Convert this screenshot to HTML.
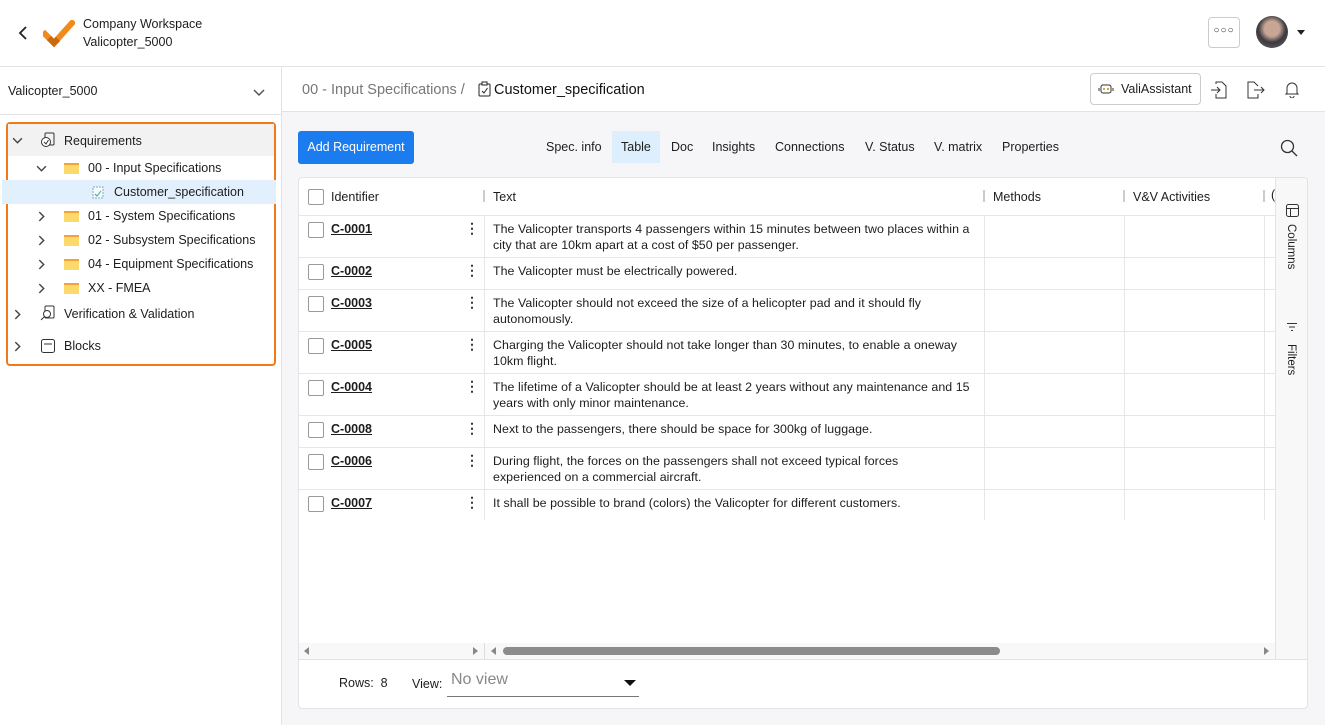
<!DOCTYPE html>
<html><head><meta charset="utf-8"><style>
*{box-sizing:border-box;margin:0;padding:0}
body{width:1325px;height:725px;overflow:hidden;font-family:"Liberation Sans",sans-serif;font-size:13px;color:#1d1d1d;background:#fff;position:relative}
.a{position:absolute}
.top{left:0;top:0;width:1325px;height:67px;border-bottom:1px solid #e3e3e6;background:#fff}
.side{left:0;top:67px;width:282px;height:658px;border-right:1px solid #e3e3e6;background:#fff}
.main{left:282px;top:67px;width:1043px;height:658px;background:#f6f6f8}
.tree div.r{position:absolute;left:0;width:266px;height:24px;line-height:24px;font-size:12.5px}
.fold{display:inline-block;width:15px;height:11px;background:#fbd96a;border-top:2px solid #f6a13a;position:absolute;top:7px}
.ch{position:absolute;top:7px}
.tab{position:absolute;top:131px;height:32px;line-height:32px;font-size:12.5px;padding:0 9px;color:#1d1d1d}
.card{left:298px;top:177px;width:1010px;height:532px;background:#fff;border:1px solid #e3e3e6;border-radius:4px;overflow:hidden}
.row{position:absolute;left:0;width:976px;border-bottom:1px solid #e6e6e8}
.cb{position:absolute;left:9px;width:16px;height:16px;border:1px solid #9a9a9a;border-radius:2px;background:#fff}
.id{position:absolute;left:32px;font-weight:bold;text-decoration:underline;font-size:12.5px}
.dots{position:absolute;left:166px;font-size:14px;font-weight:bold;color:#333}
.txt{position:absolute;left:194px;width:486px;font-size:12.4px;line-height:16px;letter-spacing:0.05px}
.vl{position:absolute;top:38px;height:304px;width:1px;background:#e6e6e8}
</style></head><body>
<svg width="0" height="0" style="position:absolute"><defs>
<symbol id="cr" viewBox="0 0 10 10"><path d="M3 1 L7 5 L3 9" fill="none" stroke="#444" stroke-width="1.3"/></symbol>
<symbol id="cd" viewBox="0 0 10 10"><path d="M1 3 L5 7 L9 3" fill="none" stroke="#444" stroke-width="1.3"/></symbol>
</defs></svg>
<div class="a top">
 <svg class="a" style="left:18px;top:26px" width="10" height="14"><path d="M8 1 L2 7 L8 13" fill="none" stroke="#222" stroke-width="1.8"/></svg>
 <svg class="a" style="left:43px;top:20px" width="32" height="28" viewBox="0 0 32 28"><path d="M2 14 L11 23 L29 3" stroke="#f08a1a" stroke-width="6" fill="none" stroke-linecap="square"/><path d="M6 18 L11 23 L15 19" stroke="#c96a10" stroke-width="6" fill="none"/></svg>
 <div class="a" style="left:83px;top:15px;font-size:12.5px;line-height:18px">Company Workspace<br>Valicopter_5000</div>
 <div class="a" style="left:1208px;top:17px;width:32px;height:31px;border:1px solid #ccc;border-radius:4px;text-align:center;line-height:26px;font-size:10px;letter-spacing:1px">&#9675;&#9675;&#9675;</div>
 <div class="a" style="left:1256px;top:16px;width:32px;height:32px;border-radius:50%;background:radial-gradient(circle at 50% 40%,#c9a596 0 30%,#3a3a3f 55%,#6d6d70)"></div>
 <div class="a" style="left:1297px;top:30px;width:0;height:0;border-left:4px solid transparent;border-right:4px solid transparent;border-top:5px solid #222"></div>
</div>
<div class="a side">
 <div class="a" style="left:8px;top:17px;font-size:12.5px">Valicopter_5000</div>
 <svg class="a" style="left:252px;top:21px" width="14" height="10"><path d="M2 2 L7 7 L12 2" stroke="#555" stroke-width="1.5" fill="none"/></svg>
 <div class="a" style="left:0;top:47px;width:281px;border-top:1px solid #e3e3e6"></div>
 <div class="a tree" style="left:6px;top:55px;width:270px;height:244px;border:2px solid #f07a1a;border-radius:4px">
  <div class="r" style="top:0;height:32px;line-height:32px;background:#f2f2f3"><svg class="ch" style="left:4px;top:11px" width="11" height="11"><use href="#cd"/></svg>
   <svg class="a" style="left:32px;top:8px" width="16" height="16"><rect x="5" y="1" width="9" height="12" rx="1" fill="none" stroke="#333"/><circle cx="6" cy="10" r="4.5" fill="#fff" stroke="#333"/><path d="M4 10 L6 12 L8.5 8" fill="none" stroke="#333"/></svg>
   <span class="a" style="left:56px;top:1px">Requirements</span></div>
  <div class="r" style="top:32px"><svg class="ch" style="left:28px" width="11" height="11"><use href="#cd"/></svg><span class="fold" style="left:56px"></span><span class="a" style="left:80px">00 - Input Specifications</span></div>
  <div class="r" style="top:56px;left:-6px;width:274px;background:#e1f0fc"><svg class="a" style="left:90px;top:5px" width="12" height="14"><rect x="1" y="2" width="10" height="11" fill="#f5fafc" stroke="#8ab" stroke-dasharray="2 1"/><path d="M3 9 L5 11 L9 6" stroke="#3a8" fill="none"/></svg><span class="a" style="left:112px">Customer_specification</span></div>
  <div class="r" style="top:80px"><svg class="ch" style="left:28px" width="11" height="11"><use href="#cr"/></svg><span class="fold" style="left:56px"></span><span class="a" style="left:80px">01 - System Specifications</span></div>
  <div class="r" style="top:104px"><svg class="ch" style="left:28px" width="11" height="11"><use href="#cr"/></svg><span class="fold" style="left:56px"></span><span class="a" style="left:80px">02 - Subsystem Specifications</span></div>
  <div class="r" style="top:128px"><svg class="ch" style="left:28px" width="11" height="11"><use href="#cr"/></svg><span class="fold" style="left:56px"></span><span class="a" style="left:80px">04 - Equipment Specifications</span></div>
  <div class="r" style="top:152px"><svg class="ch" style="left:28px" width="11" height="11"><use href="#cr"/></svg><span class="fold" style="left:56px"></span><span class="a" style="left:80px">XX - FMEA</span></div>
  <div class="r" style="top:178px"><svg class="ch" style="left:4px" width="11" height="11"><use href="#cr"/></svg><svg class="a" style="left:32px;top:3px" width="17" height="17"><rect x="5" y="1" width="9" height="12" rx="1" fill="none" stroke="#333"/><circle cx="7" cy="9" r="3.5" fill="#fff" stroke="#333"/><path d="M4.5 11.5 L1 15" stroke="#333"/></svg><span class="a" style="left:56px">Verification &amp; Validation</span></div>
  <div class="r" style="top:210px"><svg class="ch" style="left:4px" width="11" height="11"><use href="#cr"/></svg><svg class="a" style="left:32px;top:4px" width="16" height="16"><rect x="1.5" y="1.5" width="13" height="13" rx="2" fill="none" stroke="#333"/><path d="M4 6 H12" stroke="#333"/></svg><span class="a" style="left:56px">Blocks</span></div>
 </div>
</div>
<div class="a main">
 <div class="a" style="left:0;top:0;width:1043px;height:45px;background:#fff;border-bottom:1px solid #e3e3e6">
  <div class="a" style="left:20px;top:15px;font-size:14.5px;color:#777">00 - Input Specifications / </div>
  <svg class="a" style="left:196px;top:14px" width="13" height="16"><rect x="1" y="3" width="11" height="12" rx="1" fill="none" stroke="#222"/><rect x="4" y="1" width="5" height="3" fill="#fff" stroke="#222"/><path d="M4 10 L6 12 L9.5 7" fill="none" stroke="#222"/></svg>
  <div class="a" style="left:212px;top:15px;font-size:14.5px;color:#111">Customer_specification</div>
  <div class="a" style="left:808px;top:6px;width:111px;height:32px;border:1px solid #ccc;border-radius:4px;font-size:12.5px;line-height:30px;padding-left:30px">ValiAssistant</div>
  <svg class="a" style="left:816px;top:15px" width="16" height="14"><rect x="3" y="3" width="10" height="8" rx="2" fill="#fff" stroke="#333"/><circle cx="6" cy="7" r="1" fill="#c80"/><circle cx="10" cy="7" r="1" fill="#c80"/><path d="M1 6v3M15 6v3" stroke="#333"/></svg>
  <svg class="a" style="left:928px;top:13px" width="18" height="20"><path d="M6 4 V2 H12 L16 6 V18 H6 V14" fill="none" stroke="#333"/><path d="M1 10 H10 M7 7 L10 10 L7 13" fill="none" stroke="#333"/></svg>
  <svg class="a" style="left:964px;top:13px" width="20" height="20"><path d="M12 6 V6 L8 2 H2 V18 H12 V14" fill="none" stroke="#333"/><path d="M8 10 H18 M15 7 L18 10 L15 13" fill="none" stroke="#333"/></svg>
  <svg class="a" style="left:1002px;top:13px" width="16" height="18"><path d="M3 13 V8 a5 5 0 0 1 10 0 V13 L14 14 H2 Z" fill="none" stroke="#333"/><path d="M6 16 a2 2 0 0 0 4 0" fill="none" stroke="#333"/></svg>
 </div>
</div>
<div class="a" style="left:298px;top:131px;width:116px;height:33px;background:#1b7cf0;border-radius:3px;color:#fff;font-size:12.5px;line-height:33px;text-align:center">Add Requirement</div>
<div class="tab" style="left:537px">Spec. info</div>
<div class="tab" style="left:612px;background:#ddeefc">Table</div>
<div class="tab" style="left:662px">Doc</div>
<div class="tab" style="left:703px">Insights</div>
<div class="tab" style="left:766px">Connections</div>
<div class="tab" style="left:856px">V. Status</div>
<div class="tab" style="left:925px">V. matrix</div>
<div class="tab" style="left:993px">Properties</div>
<svg class="a" style="left:1280px;top:139px" width="18" height="18"><circle cx="7.5" cy="7.5" r="6" fill="none" stroke="#333" stroke-width="1.3"/><path d="M12 12 L17 17" stroke="#333" stroke-width="1.3"/></svg>
<div class="a card">
 <div class="row" style="top:0;height:38px;font-size:12.5px"><div class="cb" style="top:11px"></div><span class="a" style="left:32px;top:12px">Identifier</span><span class="a" style="left:184px;top:12px;width:2px;height:12px;background:#ccc"></span><span class="a" style="left:194px;top:12px">Text</span><span class="a" style="left:684px;top:12px;width:2px;height:12px;background:#ccc"></span><span class="a" style="left:694px;top:12px">Methods</span><span class="a" style="left:824px;top:12px;width:2px;height:12px;background:#ccc"></span><span class="a" style="left:834px;top:12px">V&amp;V Activities</span><span class="a" style="left:964px;top:12px;width:2px;height:12px;background:#ccc"></span><span class="a" style="left:972px;top:10px">(</span></div>
 <div class="vl" style="left:185px"></div><div class="vl" style="left:685px"></div><div class="vl" style="left:825px"></div><div class="vl" style="left:965px"></div>
 <div class="row" style="top:38px;height:42px"><div class="cb" style="top:6px"></div><span class="id" style="top:6px">C-0001</span><span class="dots" style="top:4px">&#8942;</span><div class="txt" style="top:5px">The Valicopter transports 4 passengers within 15 minutes between two places within a city that are 10km apart at a cost of $50 per passenger.</div></div>
 <div class="row" style="top:80px;height:32px"><div class="cb" style="top:6px"></div><span class="id" style="top:6px">C-0002</span><span class="dots" style="top:4px">&#8942;</span><div class="txt" style="top:5px">The Valicopter must be electrically powered.</div></div>
 <div class="row" style="top:112px;height:42px"><div class="cb" style="top:6px"></div><span class="id" style="top:6px">C-0003</span><span class="dots" style="top:4px">&#8942;</span><div class="txt" style="top:5px">The Valicopter should not exceed the size of a helicopter pad and it should fly autonomously.</div></div>
 <div class="row" style="top:154px;height:42px"><div class="cb" style="top:6px"></div><span class="id" style="top:6px">C-0005</span><span class="dots" style="top:4px">&#8942;</span><div class="txt" style="top:5px">Charging the Valicopter should not take longer than 30 minutes, to enable a oneway 10km flight.</div></div>
 <div class="row" style="top:196px;height:42px"><div class="cb" style="top:6px"></div><span class="id" style="top:6px">C-0004</span><span class="dots" style="top:4px">&#8942;</span><div class="txt" style="top:5px">The lifetime of a Valicopter should be at least 2 years without any maintenance and 15 years with only minor maintenance.</div></div>
 <div class="row" style="top:238px;height:32px"><div class="cb" style="top:6px"></div><span class="id" style="top:6px">C-0008</span><span class="dots" style="top:4px">&#8942;</span><div class="txt" style="top:5px">Next to the passengers, there should be space for 300kg of luggage.</div></div>
 <div class="row" style="top:270px;height:42px"><div class="cb" style="top:6px"></div><span class="id" style="top:6px">C-0006</span><span class="dots" style="top:4px">&#8942;</span><div class="txt" style="top:5px;width:475px">During flight, the forces on the passengers shall not exceed typical forces experienced on a commercial aircraft.</div></div>
 <div class="row" style="top:312px;height:32px;border:none"><div class="cb" style="top:6px"></div><span class="id" style="top:6px">C-0007</span><span class="dots" style="top:4px">&#8942;</span><div class="txt" style="top:5px">It shall be possible to brand (colors) the Valicopter for different customers.</div></div>
 <div class="a" style="left:976px;top:0;width:33px;height:481px;background:#f8f8f9;border-left:1px solid #e3e3e6">
  <svg class="a" style="left:10px;top:26px" width="13" height="13"><rect x="0.5" y="0.5" width="12" height="12" rx="2" fill="none" stroke="#333"/><path d="M0.5 4.5 H12.5 M4.5 4.5 V12.5" stroke="#333"/></svg>
  <div class="a" style="left:9px;top:46px;writing-mode:vertical-rl;font-size:11.5px">Columns</div>
  <svg class="a" style="left:10px;top:144px" width="12" height="10"><path d="M1 1.5 H11 M3 5 H9 M5 8.5 H7" stroke="#333"/></svg>
  <div class="a" style="left:9px;top:166px;writing-mode:vertical-rl;font-size:11.5px">Filters</div>
 </div>
 <div class="a" style="left:0;top:465px;width:976px;height:16px;background:#f8f8f8"></div>
 <div class="a" style="left:5px;top:469px;border-top:4px solid transparent;border-bottom:4px solid transparent;border-right:5px solid #888"></div>
 <div class="a" style="left:174px;top:469px;border-top:4px solid transparent;border-bottom:4px solid transparent;border-left:5px solid #888"></div>
 <div class="a" style="left:185px;top:465px;width:1px;height:16px;background:#ddd"></div>
 <div class="a" style="left:192px;top:469px;border-top:4px solid transparent;border-bottom:4px solid transparent;border-right:5px solid #888"></div>
 <div class="a" style="left:204px;top:469px;width:497px;height:8px;border-radius:4px;background:#8c8c8c"></div>
 <div class="a" style="left:965px;top:469px;border-top:4px solid transparent;border-bottom:4px solid transparent;border-left:5px solid #888"></div>
 <div class="a" style="left:0;top:481px;width:1010px;border-top:1px solid #e3e3e6"></div>
 <div class="a" style="left:40px;top:498px;font-size:12.5px">Rows:&nbsp; 8</div>
 <div class="a" style="left:113px;top:499px;font-size:12.5px">View:</div>
 <div class="a" style="left:148px;top:493px;width:192px;height:26px;border-bottom:1px solid #777;font-size:16px;color:#888;padding-left:4px">No view</div>
 <div class="a" style="left:325px;top:502px;border-left:6px solid transparent;border-right:6px solid transparent;border-top:6px solid #111"></div>
</div>
</body></html>
